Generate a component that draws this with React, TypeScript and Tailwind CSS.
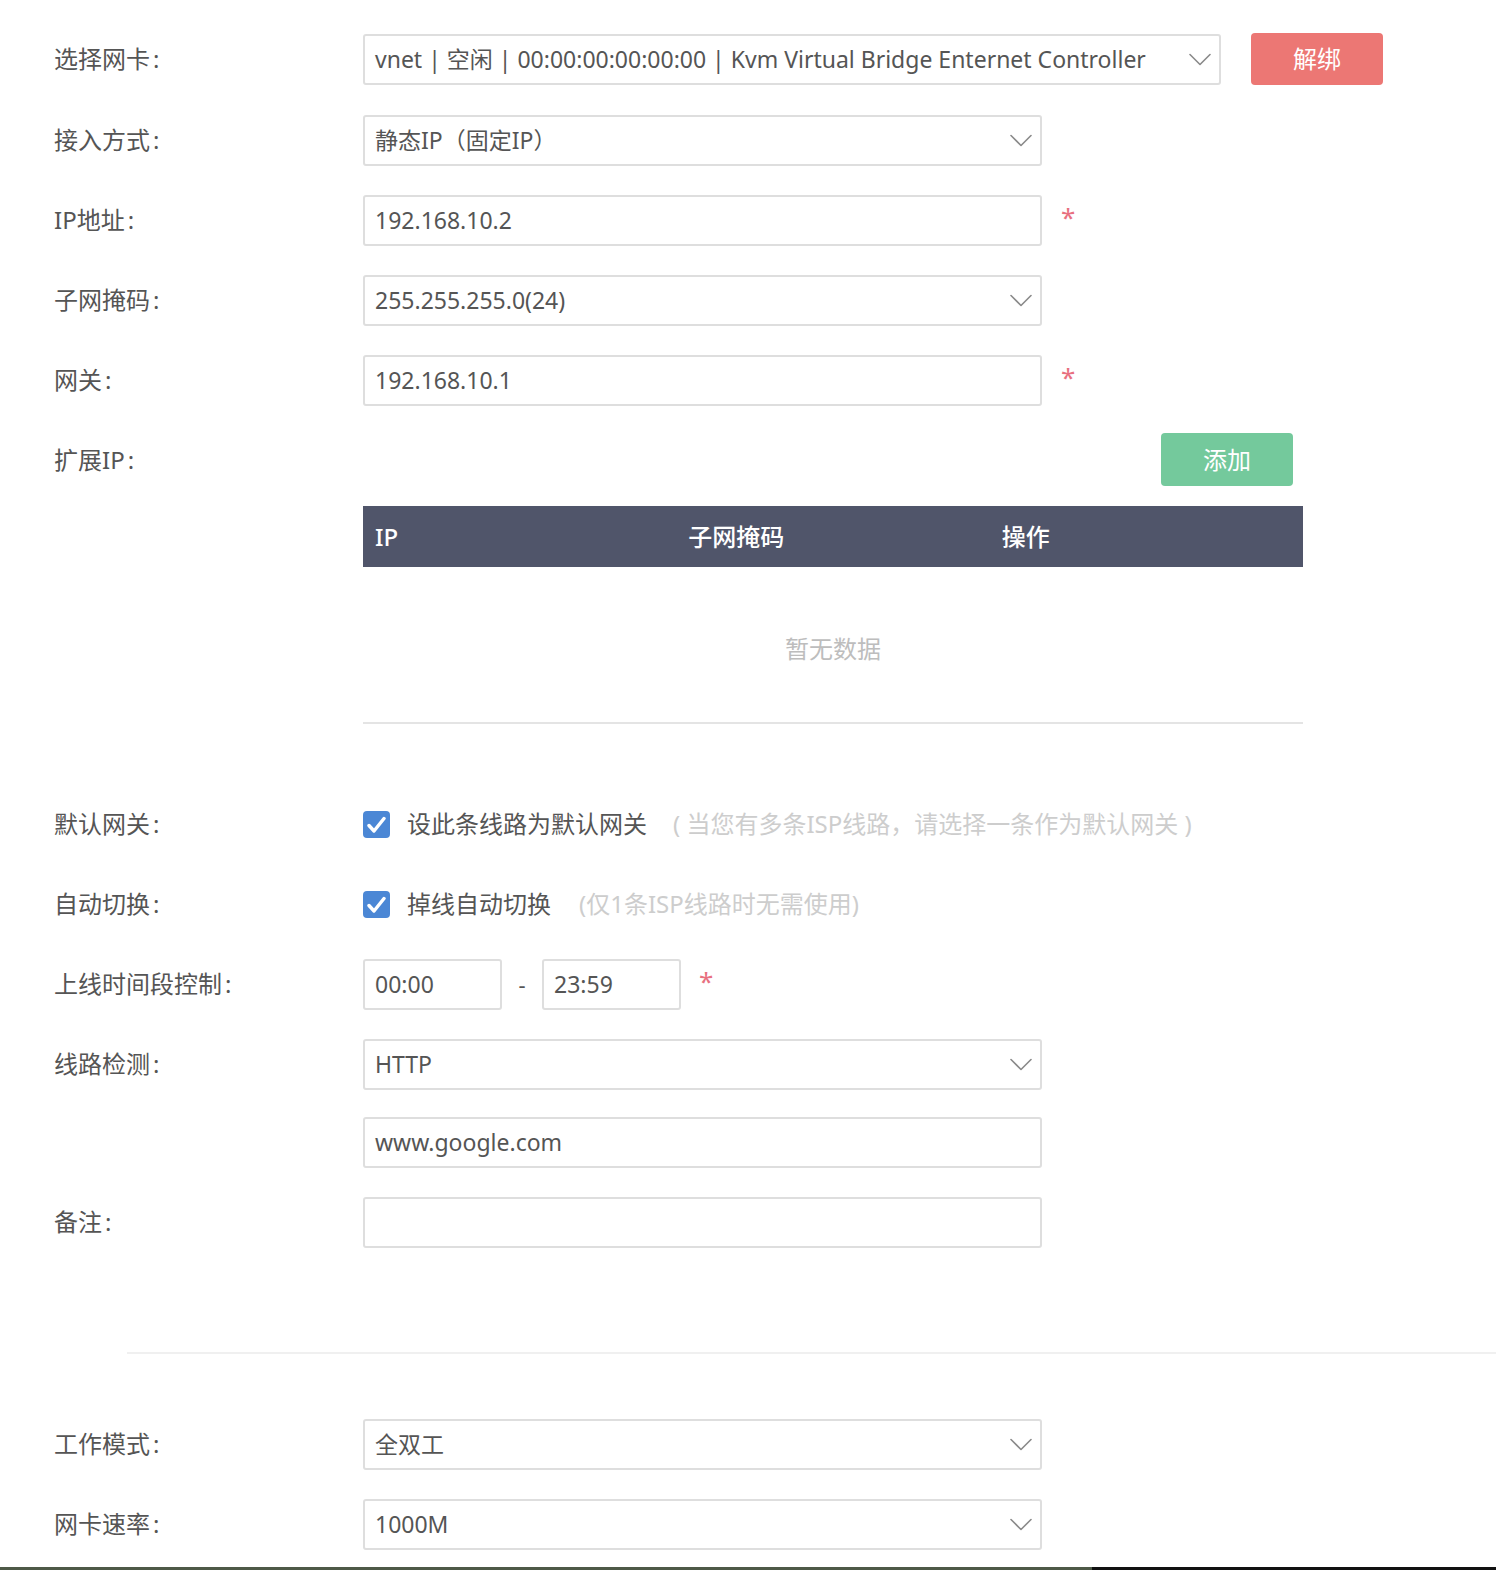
import type { ReactNode } from 'react';

const font = { fontFamily: '"Noto Sans", "Noto Sans CJK SC", sans-serif' };

function Chevron() {
  return (
    <svg width="22" height="13" viewBox="0 0 22 13" fill="none" className="shrink-0">
      <path d="M1 1.5 L11 11.5 L21 1.5" stroke="#8a8a8a" strokeWidth="1.6" strokeLinecap="round" strokeLinejoin="round" />
    </svg>
  );
}

function Row({ label, children, className = 'h-[50px] mt-[30px]' }: { label?: string; children?: ReactNode; className?: string }) {
  return (
    <div className={`flex items-center ${className}`}>
      <div className="w-[309px] shrink-0 text-[24px] text-[#555] whitespace-nowrap">
        {label}
        {label && <span className="ml-[3px]">:</span>}
      </div>
      {children}
    </div>
  );
}

function Select({ value, w = 'w-[679px]' }: { value: string; w?: string }) {
  return (
    <div className={`${w} h-[51px] flex items-center justify-between pl-[10px] pr-[8px] border-2 border-[#dedede] rounded-[3px] bg-white`}>
      <span className="text-[23px] text-[#555] whitespace-nowrap">{value}</span>
      <Chevron />
    </div>
  );
}

function Input({ value = '', w = 'w-[679px]' }: { value?: string; w?: string }) {
  return (
    <div className={`${w} h-[51px] flex items-center pl-[10px] border-2 border-[#dedede] rounded-[3px] bg-white`}>
      <span className="text-[23px] text-[#555] whitespace-nowrap">{value}</span>
    </div>
  );
}

function Star({ ml = 'ml-[19px]' }: { ml?: string }) {
  return <span className={`${ml} text-[26px] leading-none text-[#e8707f] -mt-[6px]`}>*</span>;
}

function Check() {
  return (
    <div className="w-[27px] h-[27px] rounded-[4px] bg-[#4b87d5] flex items-center justify-center shrink-0">
      <svg width="19" height="17" viewBox="0 0 19 17">
        <path d="M2 9.5 L7 15 L17 2.5" stroke="#fff" strokeWidth="3.4" fill="none" strokeLinecap="round" strokeLinejoin="round" />
      </svg>
    </div>
  );
}

export default function App() {
  return (
    <div className="w-[1496px] h-[1570px] bg-white flex flex-col overflow-hidden" style={font}>
      <div className="flex flex-col pl-[54px] pt-[33px] flex-1">
        <Row label="选择网卡" className="h-[52px]">
          <Select value="vnet | 空闲 | 00:00:00:00:00:00 | Kvm Virtual Bridge Enternet Controller" w="w-[858px]" />
          <button className="ml-[30px] w-[132px] h-[52px] rounded-[4px] bg-[#ec7774] text-white text-[24px]">解绑</button>
        </Row>
        <Row label="接入方式">
          <Select value="静态IP（固定IP）" />
        </Row>
        <Row label="IP地址">
          <Input value="192.168.10.2" />
          <Star />
        </Row>
        <Row label="子网掩码">
          <Select value="255.255.255.0(24)" />
        </Row>
        <Row label="网关">
          <Input value="192.168.10.1" />
          <Star />
        </Row>
        <Row label="扩展IP" className="h-[53px] mt-[28px]">
          <div className="w-[930px] flex justify-end">
            <button className="w-[132px] h-[53px] rounded-[4px] bg-[#74c99c] text-white text-[24px]">添加</button>
          </div>
        </Row>

        <div className="ml-[309px] mt-[20px] w-[940px] flex flex-col border-b-2 border-[#e4e4e4]">
          <div className="h-[61px] bg-[#50556a] grid grid-cols-3 items-center text-white text-[24px] font-medium">
            <span className="pl-3">IP</span>
            <span className="pl-3">子网掩码</span>
            <span className="pl-3">操作</span>
          </div>
          <div className="h-[155px] pt-2 flex items-center justify-center text-[24px] text-[#bdbdbd]">暂无数据</div>
        </div>

        <Row label="默认网关" className="h-[50px] mt-[75px]">
          <Check />
          <span className="ml-[17px] text-[24px] text-[#555] whitespace-nowrap">设此条线路为默认网关</span>
          <span className="ml-[26px] text-[24px] text-[#cdcdcd] whitespace-nowrap">( 当您有多条ISP线路，请选择一条作为默认网关 )</span>
        </Row>
        <Row label="自动切换">
          <Check />
          <span className="ml-[17px] text-[24px] text-[#555] whitespace-nowrap">掉线自动切换</span>
          <span className="ml-[28px] text-[24px] text-[#cdcdcd] whitespace-nowrap">(仅1条ISP线路时无需使用)</span>
        </Row>
        <Row label="上线时间段控制">
          <Input value="00:00" w="w-[139px]" />
          <span className="w-[40px] text-center text-[22px] text-[#555]">-</span>
          <Input value="23:59" w="w-[139px]" />
          <Star ml="ml-[18px]" />
        </Row>
        <Row label="线路检测">
          <Select value="HTTP" />
        </Row>
        <Row className="h-[50px] mt-[28px]">
          <Input value="www.google.com" />
        </Row>
        <Row label="备注">
          <Input />
        </Row>

        <div className="ml-[73px] mt-[105px] h-[2px] bg-[#f0f0f0]" />

        <Row label="工作模式" className="h-[50px] mt-[65px]">
          <Select value="全双工" />
        </Row>
        <Row label="网卡速率">
          <Select value="1000M" />
        </Row>
      </div>
      <div className="h-[3px] flex shrink-0">
        <div className="w-[1092px] bg-[#4e5947]" />
        <div className="flex-1 bg-[#111]" />
      </div>
    </div>
  );
}
